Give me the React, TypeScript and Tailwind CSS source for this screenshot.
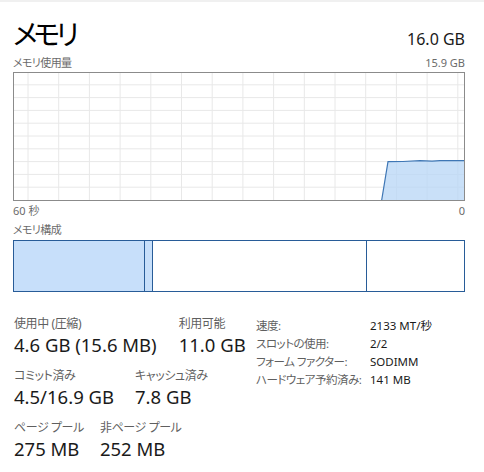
import React from "react";

const font = "[font-family:'Noto_Sans','Noto_Sans_CJK_JP',sans-serif] [font-feature-settings:'palt']";

const vLines = Array.from({ length: 15 }, (_, i) => 14 + i * 30.7);
const hLines = Array.from({ length: 9 }, (_, i) => 11.8 + i * 12.8);

const UsageChart: React.FC = () => (
	<div className="h-[129px] border border-[#8b8b8b] bg-white">
		<svg width="100%" height="100%" viewBox="0 0 450 127" preserveAspectRatio="none">
			{vLines.map((x) => (
				<line key={x} x1={x} y1={0} x2={x} y2={127} stroke="#e8e8e8" strokeWidth={1} />
			))}
			{hLines.map((y) => (
				<line key={y} x1={0} y1={y} x2={450} y2={y} stroke="#e8e8e8" strokeWidth={1} />
			))}
			<path
				d="M367.7 127 L374 88.7 L389 88.5 L406 87.7 L418 88.2 L426 87.6 L450 87.6 L450 127 Z"
				fill="#b7d5f6"
				fillOpacity={0.75}
				stroke="none"
			/>
			<path
				d="M367.7 127 L374 88.7 L389 88.5 L406 87.7 L418 88.2 L426 87.6 L450 87.6"
				fill="none"
				stroke="#3f77b5"
				strokeWidth={1.2}
			/>
		</svg>
	</div>
);

const Stat: React.FC<{ label: string; value: string }> = ({ label, value }) => (
	<div className="flex flex-col">
		<span className="text-[12px] tracking-[-0.4px] leading-[16px] text-[#5f5f5f] whitespace-nowrap">{label}</span>
		<span className="text-[18.5px] leading-[26px] text-[#1a1a1a] whitespace-nowrap">{value}</span>
	</div>
);

const specs = [
	["速度:", "2133 MT/秒"],
	["スロットの使用:", "2/2"],
	["フォーム ファクター:", "SODIMM"],
	["ハードウェア予約済み:", "141 MB"],
];

export default function App() {
	return (
		<div className={`w-[484px] h-[472px] bg-white border-t-2 border-[#f0f0f0] pl-[13px] pr-[19px] ${font}`}>
			{/* header */}
			<div className="flex items-end justify-between mt-[14px] h-[36px]">
				<span className="text-[28px] tracking-[-4px] leading-[36px] text-black">メモリ</span>
				<span className="text-[16px] leading-[20px] mb-[3px] text-[#1a1a1a]">16.0 GB</span>
			</div>
			<div className="flex justify-between mt-[2px] h-[18px] text-[11px] leading-[18px] text-[#6b6b6b]">
				<span className="tracking-[-0.6px]">メモリ使用量</span>
				<span>15.9 GB</span>
			</div>

			<UsageChart />

			<div className="flex justify-between h-[20px] text-[11px] leading-[20px] text-[#6b6b6b]">
				<span>60 秒</span>
				<span>0</span>
			</div>
			<div className="h-[19px] text-[11px] tracking-[-0.6px] leading-[18px] text-[#6b6b6b]">メモリ構成</div>

			{/* composition bar */}
			<div className="flex h-[52px] border border-[#285c98]">
				<div className="w-[131px] bg-[#c7dffa] border-r border-[#285c98]" />
				<div className="w-[8px] bg-[#c7dffa] border-r border-[#285c98]" />
				<div className="w-[214px] bg-white border-r border-[#285c98]" />
				<div className="flex-1 bg-white" />
			</div>

			{/* stats */}
			<div className="flex mt-[24px] pl-[1px]">
				<div className="flex flex-col gap-[10px] w-[242px]">
					<div className="flex gap-[22px]">
						<Stat label="使用中 (圧縮)" value="4.6 GB (15.6 MB)" />
						<Stat label="利用可能" value="11.0 GB" />
					</div>
					<div className="flex gap-[21px]">
						<Stat label="コミット済み" value="4.5/16.9 GB" />
						<Stat label="キャッシュ済み" value="7.8 GB" />
					</div>
					<div className="flex gap-[16px]">
						<Stat label="ページ プール" value="275 MB" />
						<Stat label="非ページ プール" value="252 MB" />
					</div>
				</div>
				<div className="flex flex-col pt-[1px]">
					{specs.map(([k, v]) => (
						<div key={k} className="flex h-[18px] items-center text-[11.5px] whitespace-nowrap">
							<span className="w-[114px] tracking-[-0.5px] text-[#5f5f5f]">{k}</span>
							<span className="text-[#1a1a1a]">{v}</span>
						</div>
					))}
				</div>
			</div>
		</div>
	);
}
